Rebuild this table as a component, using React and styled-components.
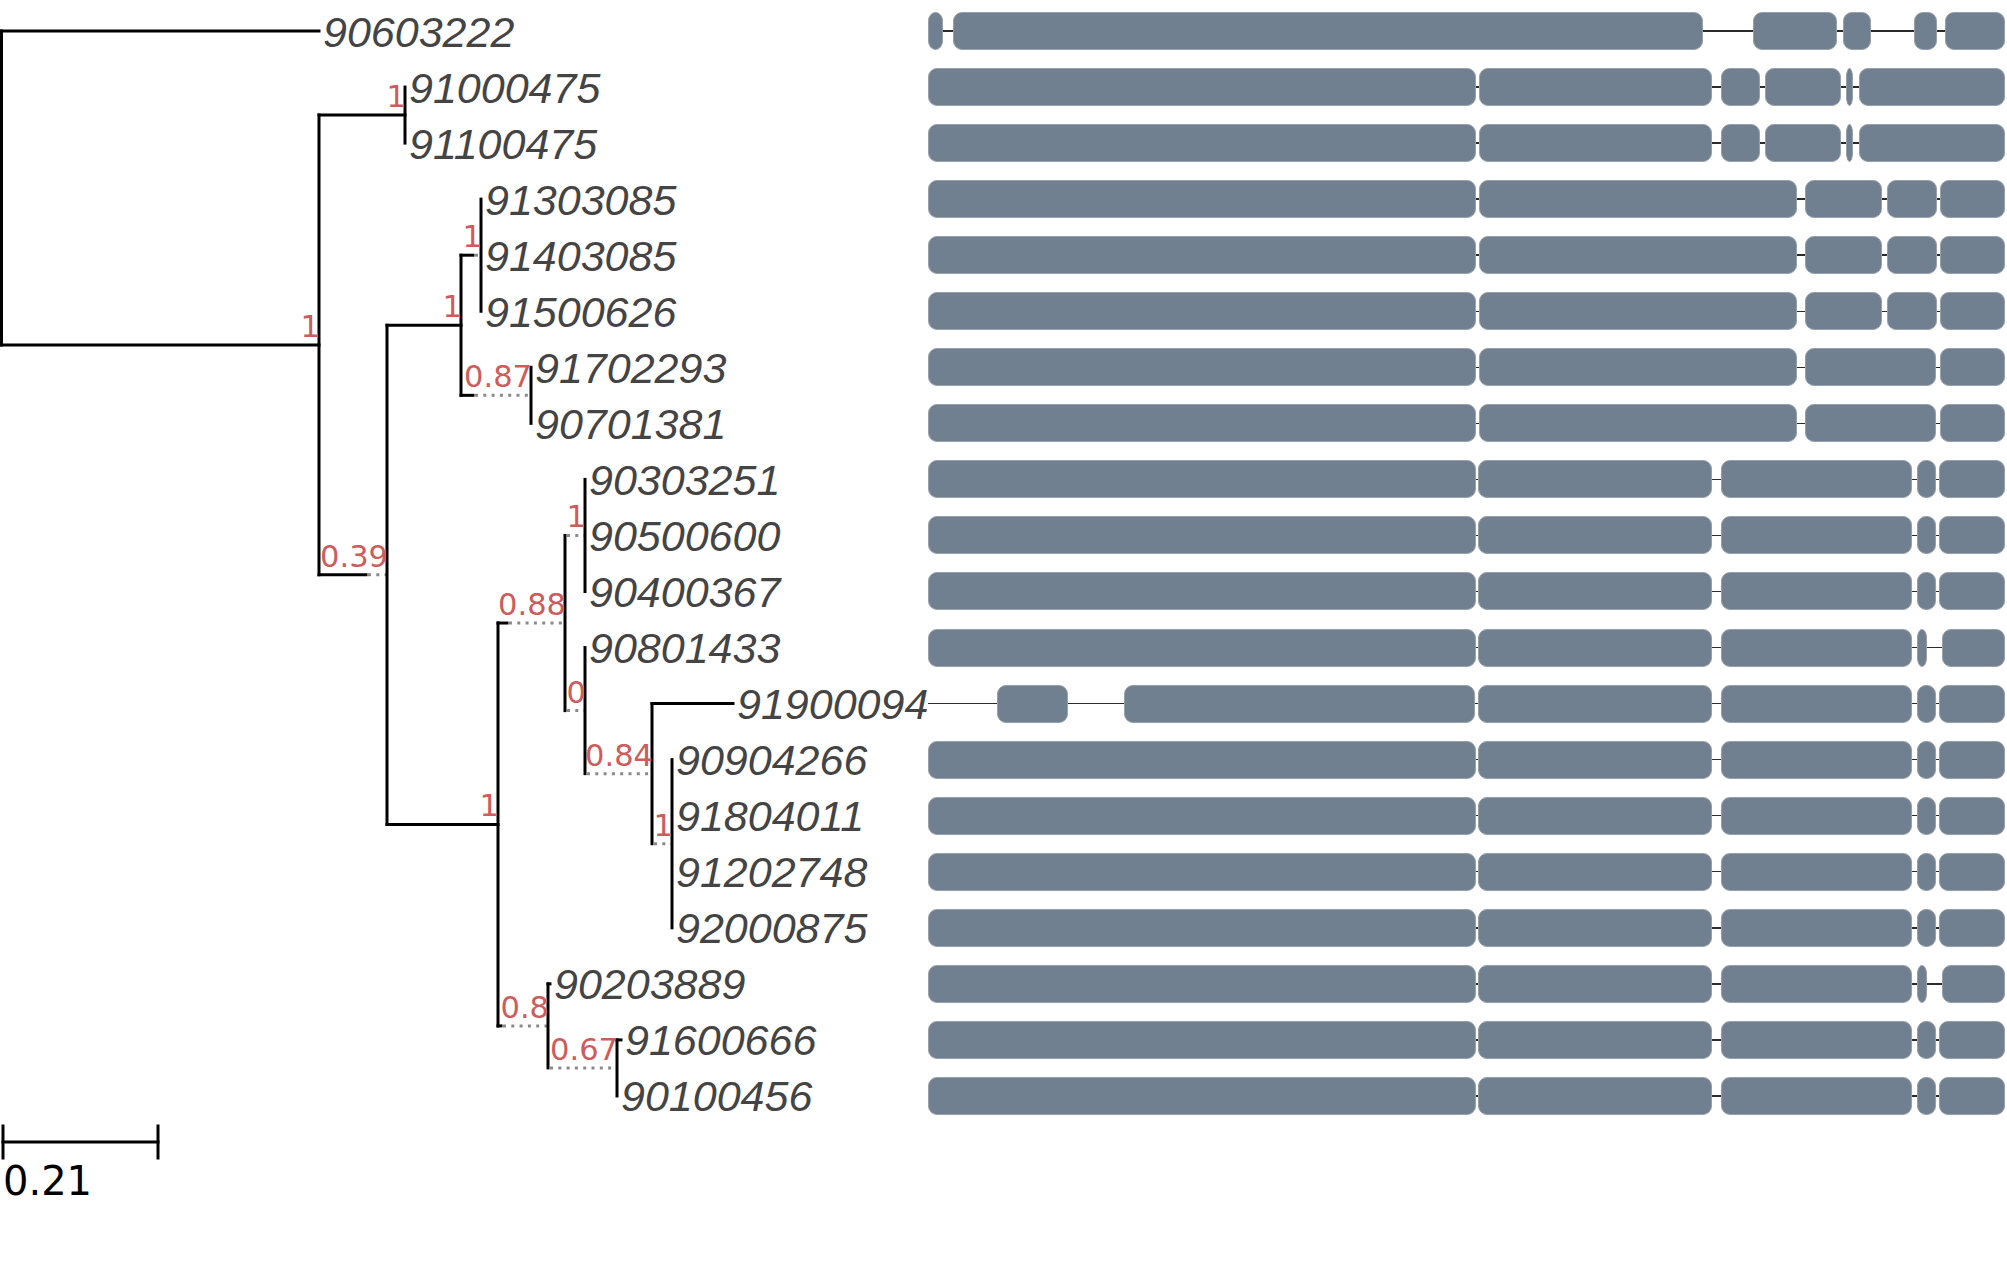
import React from 'react'
import styled, { createGlobalStyle } from 'styled-components'

const ROW_TOP = 31
const ROW_STEP = 56.05
const TRACK_START = 928
const TRACK_END = 2005

const rowY = i => ROW_TOP + ROW_STEP * i

// tree: x is the node (or tip) position, solidTo is where a branch turns dotted
const tree = {
  x: 1.5,
  children: [
    { tip: 0, x: 319 },
    {
      x: 319,
      support: '1',
      children: [
        { x: 405, support: '1', children: [{ tip: 1 }, { tip: 2 }] },
        {
          x: 387,
          support: '0.39',
          solidTo: 366,
          children: [
            {
              x: 461,
              support: '1',
              children: [
                { x: 481, support: '1', solidTo: 473, children: [{ tip: 3 }, { tip: 4 }, { tip: 5 }] },
                { x: 531, support: '0.87', solidTo: 473, children: [{ tip: 6 }, { tip: 7 }] }
              ]
            },
            {
              x: 498,
              support: '1',
              children: [
                {
                  x: 565,
                  support: '0.88',
                  solidTo: 507,
                  children: [
                    { x: 585, support: '1', solidTo: 565, children: [{ tip: 8 }, { tip: 9 }, { tip: 10 }] },
                    {
                      x: 585,
                      support: '0',
                      solidTo: 565,
                      children: [
                        { tip: 11 },
                        {
                          x: 652,
                          support: '0.84',
                          solidTo: 585,
                          children: [
                            { tip: 12, x: 733 },
                            {
                              x: 672,
                              support: '1',
                              solidTo: 652,
                              children: [{ tip: 13 }, { tip: 14 }, { tip: 15 }, { tip: 16 }]
                            }
                          ]
                        }
                      ]
                    }
                  ]
                },
                {
                  x: 548,
                  support: '0.8',
                  solidTo: 501,
                  children: [
                    { tip: 17, x: 550 },
                    { x: 617, support: '0.67', solidTo: 548, children: [{ tip: 18, x: 621 }, { tip: 19 }] }
                  ]
                }
              ]
            }
          ]
        }
      ]
    }
  ]
}

const names = [
  '90603222', '91000475', '91100475', '91303085', '91403085', '91500626',
  '91702293', '90701381', '90303251', '90500600', '90400367', '90801433',
  '91900094', '90904266', '91804011', '91202748', '92000875', '90203889',
  '91600666', '90100456'
]

const models = {
  a: [[928, 943], [953, 1703], [1753, 1837], [1843, 1871], [1914, 1937], [1945, 2005]],
  b: [[928, 1476], [1479, 1712], [1721, 1760], [1765, 1841], [1846, 1853], [1859, 2005]],
  c: [[928, 1476], [1479, 1797], [1805, 1882], [1887, 1937], [1940, 2005]],
  d: [[928, 1476], [1479, 1797], [1805, 1936], [1940, 2005]],
  e: [[928, 1476], [1478, 1712], [1721, 1912], [1917, 1936], [1939, 2005]],
  f: [[928, 1476], [1478, 1712], [1721, 1912], [1917, 1927], [1942, 2005]],
  g: [[997, 1068], [1124, 1475], [1478, 1712], [1721, 1912], [1917, 1936], [1939, 2005]]
}

const rowModels = 'abbcccddeeefgeeeefee'.split('')

function place(node, parentX) {
  if (node.tip !== undefined) {
    node.x = node.x ?? parentX
    node.y = rowY(node.tip)
  } else {
    node.children.forEach(c => place(c, node.x))
    const first = node.children[0]
    const last = node.children[node.children.length - 1]
    node.y = (first.y + last.y) / 2
  }
  node.parentX = parentX
  return node
}

function collect(node, out) {
  out.push(node)
  if (node.children) node.children.forEach(c => collect(c, out))
  return out
}

const nodes = collect(place(tree, null), [])

export default function App() {
  return (
    <>
      <GlobalStyle />
      <Figure>
        <TreeCanvas viewBox="0 0 928 1282">
          {nodes.map((n, i) => {
            const parts = []
            if (n.parentX !== null && n.x > n.parentX) {
              const solidEnd = n.solidTo ?? n.x
              if (solidEnd > n.parentX)
                parts.push(<Branch key={`s${i}`} x1={n.parentX} y1={n.y} x2={solidEnd} y2={n.y} />)
              if (solidEnd < n.x)
                parts.push(<Branch key={`d${i}`} $dotted x1={solidEnd + 2} y1={n.y} x2={n.x} y2={n.y} />)
            }
            if (n.children) {
              const top = n.children[0].y
              const bottom = n.children[n.children.length - 1].y
              parts.push(<Branch key={`v${i}`} x1={n.x} y1={top} x2={n.x} y2={bottom} />)
            }
            return parts
          })}
          {nodes
            .filter(n => n.support)
            .map((n, i) => (
              <Support key={`p${i}`} x={n.x + 1} y={n.y - 8}>
                {n.support}
              </Support>
            ))}
          {nodes
            .filter(n => n.tip !== undefined)
            .map(n => (
              <TipLabel key={n.tip} x={n.x + 4} y={n.y + 15.5}>
                {names[n.tip]}
              </TipLabel>
            ))}
          <Branch x1={3} y1={1142} x2={158} y2={1142} />
          <Branch x1={3} y1={1126} x2={3} y2={1158} />
          <Branch x1={158} y1={1126} x2={158} y2={1158} />
          <ScaleLabel x={3} y={1195}>0.21</ScaleLabel>
        </TreeCanvas>
        <Tracks>
          {rowModels.map((m, i) => (
            <GeneRow key={i} exons={models[m]} />
          ))}
        </Tracks>
      </Figure>
    </>
  )
}

function GeneRow({ exons }) {
  const parts = []
  let cursor = TRACK_START
  exons.forEach(([a, b], i) => {
    if (a > cursor) parts.push(<Intron key={`i${i}`} style={{ width: a - cursor }} />)
    parts.push(<Exon key={`e${i}`} style={{ width: b - a }} />)
    cursor = b
  })
  return <TrackRow>{parts}</TrackRow>
}

const GlobalStyle = createGlobalStyle`
  html, body {
    margin: 0;
    background: #ffffff;
  }
  body {
    font-family: "Liberation Sans", Arial, sans-serif;
  }
`
const Figure = styled.div`
  display: flex;
  align-items: flex-start;
  width: 2007px;
  height: 1282px;
  overflow: hidden;
`
const TreeCanvas = styled.svg`
  flex: none;
  display: block;
  width: 928px;
  height: 1282px;
  overflow: visible;
`
const Branch = styled.line`
  stroke: ${p => (p.$dotted ? '#8a8a8a' : '#000000')};
  stroke-width: 3;
  stroke-linecap: ${p => (p.$dotted ? 'butt' : 'square')};
  stroke-dasharray: ${p => (p.$dotted ? '3 5.3' : 'none')};
`
const TipLabel = styled.text`
  font-family: "Liberation Sans", Arial, sans-serif;
  font-style: italic;
  font-size: 43px;
  fill: #444444;
`
const Support = styled.text`
  font-family: "DejaVu Sans", sans-serif;
  font-size: 30.5px;
  fill: #cd5c5c;
  text-anchor: end;
`
const ScaleLabel = styled.text`
  font-family: "DejaVu Sans", sans-serif;
  font-size: 40px;
  fill: #000000;
`
const Tracks = styled.div`
  flex: none;
  width: ${TRACK_END - TRACK_START}px;
  padding-top: 3px;
  display: flex;
  flex-direction: column;
`
const TrackRow = styled.div`
  height: ${ROW_STEP}px;
  display: flex;
  align-items: center;
`
const Exon = styled.div`
  flex: none;
  box-sizing: border-box;
  height: 38px;
  background: #708090;
  border: 1px solid #98a1aa;
  border-radius: min(9px, 50%) / 9px;
`
const Intron = styled.div`
  flex: none;
  height: 1.5px;
  background: #2b2b2b;
`
